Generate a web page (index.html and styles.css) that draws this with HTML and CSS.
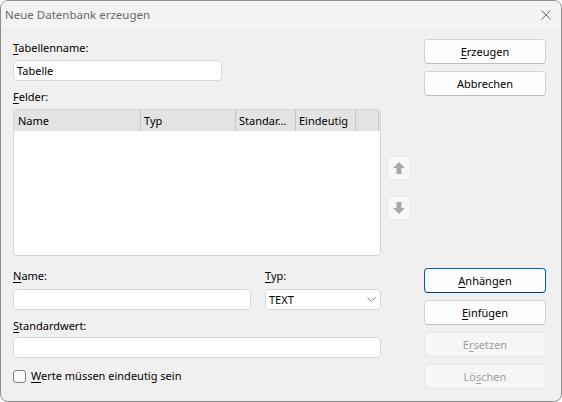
FILE: index.html
```html
<!DOCTYPE html>
<html lang="de">
<head>
<meta charset="utf-8">
<title>Neue Datenbank erzeugen</title>
<link rel="stylesheet" href="styles.css">
</head>
<body>
<div class="window">
  <div class="titlebar">
    <span class="title">Neue Datenbank erzeugen</span>
    <svg class="close" width="10" height="10" viewBox="0 0 10 10"><path d="M0.5 0.5 L9.5 9.5 M9.5 0.5 L0.5 9.5" stroke="#6f6f6f" stroke-width="1" fill="none"/></svg>
  </div>
  <div class="content">
    <div class="main">
      <label class="lbl lbl-table"><u>T</u>abellenname:</label>
      <div class="input input-table">Tabelle</div>
      <label class="lbl lbl-fields"><u>F</u>elder:</label>
      <div class="list">
        <div class="list-head">
          <div class="col col-name">Name</div>
          <div class="col col-typ">Typ</div>
          <div class="col col-std">Standar...</div>
          <div class="col col-uni">Eindeutig</div>
          <div class="col col-rest"></div>
        </div>
      </div>
      <div class="row-two">
        <div class="field">
          <label class="lbl"><u>N</u>ame:</label>
          <div class="input input-name"></div>
        </div>
        <div class="field">
          <label class="lbl"><u>T</u>yp:</label>
          <div class="input select">
            <span>TEXT</span>
            <svg width="9" height="5" viewBox="0 0 9 5"><path d="M0.5 0.5 L4.5 4.5 L8.5 0.5" stroke="#8a8a8a" stroke-width="1" fill="none"/></svg>
          </div>
        </div>
      </div>
      <label class="lbl lbl-std"><u>S</u>tandardwert:</label>
      <div class="input input-std"></div>
      <div class="check-row">
        <span class="checkbox"></span>
        <span class="lbl"><u>W</u>erte müssen eindeutig sein</span>
      </div>
    </div>
    <div class="arrows">
      <div class="arrow-btn">
        <svg width="12" height="12" viewBox="0 0 12 12"><polygon points="6,0 12,6 8.5,6 8.5,12 3.5,12 3.5,6 0,6" fill="#a9a9a9"/></svg>
      </div>
      <div class="arrow-btn arrow-down">
        <svg width="12" height="12" viewBox="0 0 12 12"><polygon points="6,12 12,6 8.5,6 8.5,0 3.5,0 3.5,6 0,6" fill="#a9a9a9"/></svg>
      </div>
    </div>
    <div class="side">
      <div class="btn-group">
        <div class="btn"><u>E</u>rzeugen</div>
        <div class="btn">Abbrechen</div>
      </div>
      <div class="btn-group btn-group-bottom">
        <div class="btn btn-default"><u>A</u>nhängen</div>
        <div class="btn"><u>E</u>infügen</div>
        <div class="btn btn-disabled">E<u>r</u>setzen</div>
        <div class="btn btn-disabled">Lö<u>s</u>chen</div>
      </div>
    </div>
  </div>
</div>
</body>
</html>
```
FILE: styles.css
```css
html, body {
  margin: 0;
  padding: 0;
  background: #ffffff;
}

.window {
  width: 562px;
  height: 402px;
  box-sizing: border-box;
  border: 1px solid #8e8e8e;
  border-radius: 8px;
  background: #f0f0f0;
  overflow: hidden;
  display: flex;
  flex-direction: column;
  font-family: "Noto Sans", "Liberation Sans", sans-serif;
  font-size: 11px;
  line-height: 16px;
  color: #000;
}

.titlebar {
  height: 27px;
  flex: none;
  background: #f3f3f3;
  display: flex;
  align-items: center;
  padding: 0 10px 0 4px;
}

.title {
  color: #6a6a6a;
  font-size: 11.5px;
}

.close {
  margin-left: auto;
}

.content {
  flex: 1;
  display: flex;
  padding-left: 12px;
}

.main {
  width: 368px;
  display: flex;
  flex-direction: column;
}

.lbl {
  display: block;
  height: 16px;
  white-space: nowrap;
}

u {
  text-decoration: underline;
  text-underline-offset: 2px;
}

.lbl-table {
  margin-top: 12px;
}

.input {
  box-sizing: border-box;
  height: 21px;
  background: #ffffff;
  border: 1px solid #d8d8d8;
  border-radius: 4px;
  padding: 1px 3px;
  line-height: 17px;
}

.input-table {
  width: 209px;
  margin-top: 4px;
}

.lbl-fields {
  margin-top: 8px;
}

.list {
  margin-top: 4px;
  height: 147px;
  box-sizing: border-box;
  background: #ffffff;
  border: 1px solid #d6d6d6;
  border-radius: 3px;
  overflow: hidden;
}

.list-head {
  display: flex;
  height: 21px;
  background: #e3e3e3;
}

.col {
  box-sizing: border-box;
  border-right: 1px solid #c6c6c6;
  padding-left: 3px;
  line-height: 21px;
  white-space: nowrap;
  overflow: hidden;
}

.col-name {
  width: 127px;
  padding-left: 4px;
}

.col-typ {
  width: 95px;
}

.col-std {
  width: 60px;
}

.col-uni {
  width: 60px;
}

.col-rest {
  width: 23px;
}

.row-two {
  display: grid;
  grid-template-columns: 238px 1fr;
  column-gap: 14px;
  margin-top: 12px;
}

.field {
  display: flex;
  flex-direction: column;
}

.field .input {
  margin-top: 5px;
}

.select {
  display: flex;
  align-items: center;
  justify-content: space-between;
  padding-right: 4px;
}

.select span {
  line-height: 17px;
}

.lbl-std {
  margin-top: 8px;
}

.input-std {
  margin-top: 3px;
}

.check-row {
  display: flex;
  align-items: center;
  margin-top: 10px;
}

.checkbox {
  box-sizing: border-box;
  width: 13px;
  height: 13px;
  border: 1px solid #7e7e7e;
  border-radius: 3px;
  background: #fafafa;
  margin-right: 5px;
}

.arrows {
  width: 24px;
  margin-left: 6px;
  display: flex;
  flex-direction: column;
  padding-top: 128px;
}

.arrow-btn {
  box-sizing: border-box;
  width: 24px;
  height: 24px;
  background: #f7f7f7;
  border: 1px solid #e9e9e9;
  border-radius: 3px;
  display: flex;
  align-items: center;
  justify-content: center;
}

.arrow-down {
  margin-top: 16px;
}

.side {
  width: 122px;
  margin-left: 13px;
  display: flex;
  flex-direction: column;
  padding-top: 11px;
}

.btn-group {
  display: flex;
  flex-direction: column;
  gap: 7px;
}

.btn-group-bottom {
  margin-top: 172px;
}

.btn {
  box-sizing: border-box;
  height: 25px;
  background: #fdfdfd;
  border: 1px solid #d3d3d3;
  border-bottom-color: #bcbcbc;
  border-radius: 4px;
  text-align: center;
  line-height: 23px;
  color: #000;
}

.btn-default {
  border-color: #0063b1;
  border-bottom-color: #003e73;
}

.btn-disabled {
  background: #f6f6f6;
  border-color: #e6e6e6;
  color: #a0a0a0;
}
```
